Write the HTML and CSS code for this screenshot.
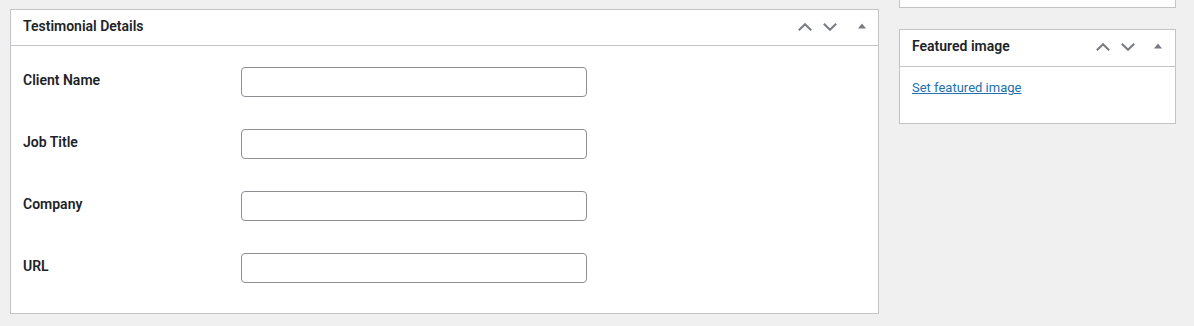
FILE: index.html
```html
<!DOCTYPE html>
<html lang="en">
<head>
<meta charset="utf-8">
<title>Edit Testimonial</title>
<link rel="stylesheet" href="styles.css">
</head>
<body>
<div class="page">
  <div class="main-col">
    <div class="postbox">
      <div class="postbox-header header-main">
        <h2 class="hndle">Testimonial Details</h2>
        <div class="handle-actions">
          <button class="hbtn" type="button" aria-label="Move up">
            <svg width="14" height="8" viewBox="0 0 14 8"><polyline points="0.8,7.2 7,1.2 13.2,7.2" fill="none" stroke="currentColor" stroke-width="2"/></svg>
          </button>
          <button class="hbtn" type="button" aria-label="Move down">
            <svg width="14" height="8" viewBox="0 0 14 8"><polyline points="0.8,0.8 7,6.8 13.2,0.8" fill="none" stroke="currentColor" stroke-width="2"/></svg>
          </button>
          <button class="hbtn toggle" type="button" aria-label="Toggle panel">
            <svg width="8" height="6" viewBox="0 0 8 6"><polygon points="0,5.5 4,0.5 8,5.5" fill="currentColor"/></svg>
          </button>
        </div>
      </div>
      <div class="inside form-grid">
        <label class="field-label" for="client">Client Name</label>
        <input class="field-input" id="client" type="text">
        <label class="field-label" for="job">Job Title</label>
        <input class="field-input" id="job" type="text">
        <label class="field-label" for="company">Company</label>
        <input class="field-input" id="company" type="text">
        <label class="field-label" for="url">URL</label>
        <input class="field-input" id="url" type="text">
      </div>
    </div>
  </div>
  <div class="side-col">
    <div class="postbox stub"></div>
    <div class="postbox featured">
      <div class="postbox-header header-side">
        <h2 class="hndle">Featured image</h2>
        <div class="handle-actions">
          <button class="hbtn" type="button" aria-label="Move up">
            <svg width="14" height="8" viewBox="0 0 14 8"><polyline points="0.8,7.2 7,1.2 13.2,7.2" fill="none" stroke="currentColor" stroke-width="2"/></svg>
          </button>
          <button class="hbtn" type="button" aria-label="Move down">
            <svg width="14" height="8" viewBox="0 0 14 8"><polyline points="0.8,0.8 7,6.8 13.2,0.8" fill="none" stroke="currentColor" stroke-width="2"/></svg>
          </button>
          <button class="hbtn toggle" type="button" aria-label="Toggle panel">
            <svg width="8" height="6" viewBox="0 0 8 6"><polygon points="0,5.5 4,0.5 8,5.5" fill="currentColor"/></svg>
          </button>
        </div>
      </div>
      <div class="inside featured-inside">
        <a class="link" href="#">Set featured image</a>
      </div>
    </div>
  </div>
</div>
</body>
</html>
```

FILE: styles.css
```css
* { box-sizing: border-box; }

html, body {
  margin: 0;
  padding: 0;
  background: #f0f0f1;
  font-family: Roboto, "Liberation Sans", sans-serif;
  color: #1d2327;
}

.page {
  display: flex;
  gap: 20px;
  padding-left: 10px;
}

.main-col {
  width: 869px;
  margin-top: 9px;
}

.side-col {
  width: 277px;
}

.postbox {
  background: #fff;
  border: 1px solid #c3c4c7;
}

.postbox-header {
  display: flex;
  align-items: center;
  justify-content: space-between;
  border-bottom: 1px solid #c3c4c7;
}

.header-main { height: 36px; }
.header-side { height: 37px; }

.hndle {
  margin: 0;
  padding: 0 12px 2px;
  font-size: 14px;
  font-weight: 600;
  line-height: 1.4;
  color: #1d2327;
}

.handle-actions {
  display: flex;
  align-self: stretch;
  align-items: center;
}

.hbtn {
  width: 25px;
  height: 100%;
  border: 0;
  padding: 0;
  margin: 0;
  background: none;
  color: #787c82;
  display: flex;
  align-items: center;
  justify-content: center;
  padding-bottom: 2px;
}

.hbtn.toggle {
  width: 33px;
  margin-left: 3px;
  padding-bottom: 4px;
}

.header-side .hbtn.toggle {
  width: 35px;
  margin-left: 0;
}

.hbtn svg { display: block; }

.form-grid {
  display: grid;
  grid-template-columns: 218px 346px;
  grid-auto-rows: 30px;
  row-gap: 32px;
  align-items: start;
  padding: 21px 12px 30px;
}

.field-label {
  padding-top: 4px;
  font-size: 14px;
  font-weight: 600;
  line-height: 1.3;
  color: #1d2327;
}

.field-input {
  height: 30px;
  width: 346px;
  border: 1px solid #8c8f94;
  border-radius: 4px;
  background: #fff;
  margin: 0;
  padding: 0 8px;
}

.stub {
  height: 8px;
  border-top: 0;
}

.featured {
  margin-top: 21px;
}

.featured-inside {
  height: 56px;
  padding: 10px 12px 0;
}

.link {
  font-size: 13px;
  line-height: 1.4;
  color: #2271b1;
  text-decoration: underline;
}
```
